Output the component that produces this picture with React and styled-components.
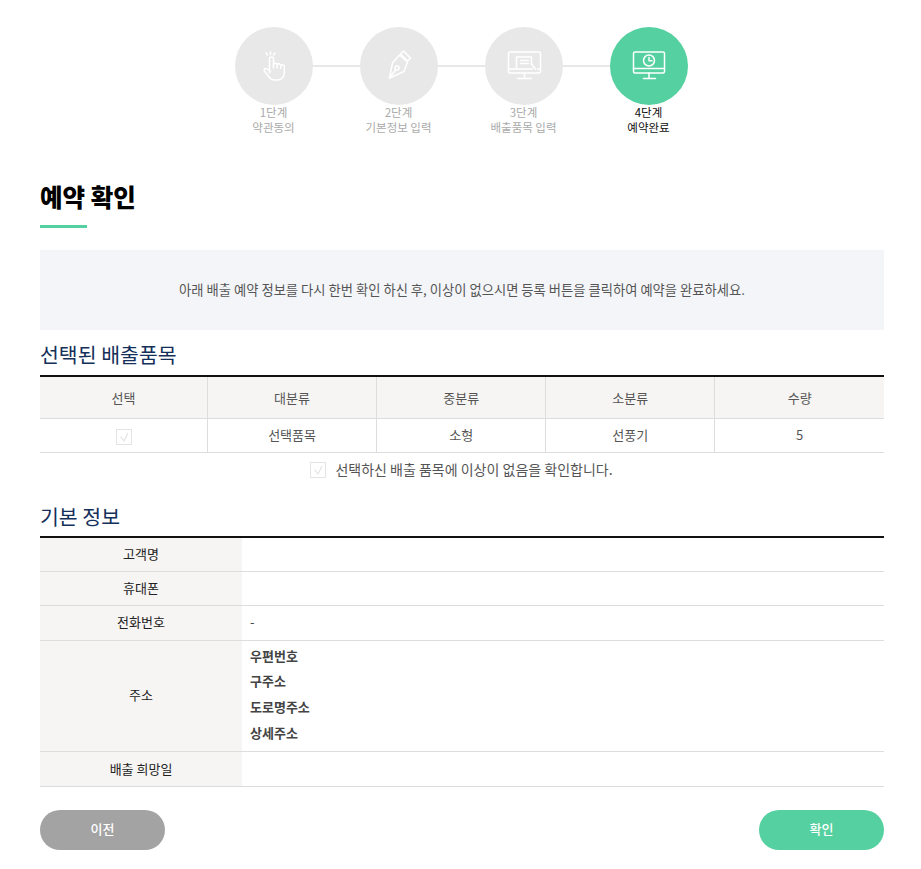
import React from "react"
import styled, { createGlobalStyle } from "styled-components"

const GlobalStyle = createGlobalStyle`
  html, body {
    margin: 0;
    padding: 0;
    background: #fff;
    font-family: "Noto Sans CJK KR", "Noto Sans", sans-serif;
    color: #444;
  }
`

const Page = styled.div`
  width: 844px;
  padding: 27px 37px 20px 40px;
`

const Steps = styled.ol`
  display: flex;
  justify-content: center;
  margin: 0 0 44px;
  padding: 0 2px 0 0;
  list-style: none;
`

const Step = styled.li`
  position: relative;
  width: 125px;
  display: flex;
  flex-direction: column;
  align-items: center;
  font-size: 11.5px;
  line-height: 15px;
  text-align: center;
  color: ${(p) => (p.$active ? "#111" : "#aaa")};

  &:not(:last-child)::after {
    content: "";
    position: absolute;
    top: 38px;
    left: 62px;
    width: 125px;
    height: 2px;
    background: #e8e8e8;
  }
`

const StepCircle = styled.div`
  position: relative;
  z-index: 1;
  width: 78px;
  height: 78px;
  border-radius: 50%;
  display: flex;
  align-items: center;
  justify-content: center;
  background: ${(p) => (p.$active ? "#55d0a0" : "#e8e8e8")};
`

const StepIcon = styled.svg`
  width: 40px;
  height: 42px;
  fill: none;
  stroke: #fff;
  stroke-width: 1.5;
  stroke-linecap: round;
  stroke-linejoin: round;
`

const StepLabel = styled.span`
  display: block;
  white-space: nowrap;
`

const Title = styled.h1`
  margin: 0;
  font-size: 24.5px;
  line-height: 36px;
  font-weight: 900;
  color: #000;
`

const TitleBar = styled.div`
  width: 47px;
  height: 3px;
  margin: 10px 0 22px;
  background: #55d0a0;
`

const Notice = styled.p`
  margin: 0;
  height: 80px;
  padding-top: 30px;
  box-sizing: border-box;
  background: #f4f5f9;
  font-size: 13.3px;
  line-height: 20px;
  text-align: center;
  color: #555;
`

const SectionTitle = styled.h2`
  margin: ${(p) => p.$top}px 0 ${(p) => p.$bottom}px;
  font-size: 20.5px;
  line-height: 30px;
  font-weight: 400;
  color: #14305a;
`

const ItemsTable = styled.table`
  width: 100%;
  table-layout: fixed;
  border-collapse: collapse;
  border-top: 2px solid #111;
  font-size: 13px;
  color: #555;

  th, td {
    text-align: center;
    font-weight: 400;
    border-bottom: 1px solid #ddd;
    border-left: 1px solid #ddd;
  }
  th:first-child, td:first-child {
    border-left: 0;
  }
  th:first-child {
    width: 167px;
  }
  th {
    height: 40px;
    padding: 0 0 1px;
    background: #f6f5f3;
  }
  td {
    height: 31px;
    padding: 0 0 2px;
  }
`

const CheckBox = styled.span`
  display: inline-flex;
  align-items: center;
  justify-content: center;
  width: 14px;
  height: 14px;
  border: 1px solid #e4e4e4;
  background: #fff;
  vertical-align: middle;
`

const ItemCheck = styled.span`
  display: block;
  position: relative;
  top: 1px;
`

const ConfirmRow = styled.label`
  display: flex;
  align-items: center;
  justify-content: center;
  gap: 9px;
  height: 34px;
  padding-right: 1px;
  font-size: 14px;
  color: #555;
`

const ConfirmText = styled.span`
  margin-bottom: 3px;
`

const InfoTable = styled.table`
  width: 100%;
  table-layout: fixed;
  border-collapse: collapse;
  border-top: 2px solid #111;
  font-size: 13px;
  color: #222;

  th, td {
    border-bottom: 1px solid #ddd;
    font-weight: 400;
  }
  th {
    width: 202px;
    padding: 0 0 2px;
    background: #f6f5f3;
    text-align: center;
  }
  td {
    padding: 0 0 2px 8px;
    height: 31.5px;
    color: #444;
  }
  tr:first-child td {
    height: 30.5px;
  }
`

const AddressLine = styled.div`
  font-weight: 700;
  line-height: 25.7px;
  color: #444;
`

const AddressCell = styled.td`
  && {
    padding-top: 2px;
    padding-bottom: 6px;
  }
`

const Actions = styled.div`
  display: flex;
  justify-content: space-between;
  margin-top: 23px;
`

const Button = styled.button`
  width: 125px;
  height: 40px;
  padding: 0 0 2px;
  border: 0;
  border-radius: 20px;
  font-family: inherit;
  font-size: 13px;
  font-weight: 500;
  color: #fff;
  background: ${(p) => (p.$primary ? "#55d0a0" : "#a3a3a3")};
`

const HandIcon = () => (
  <StepIcon viewBox="-1.5 0 40 42">
    <path d="M15 7v2.500M10.500 8l1.500 2M19.500 8l-1.500 2" />
    <path d="M14 28V14a2 2 0 0 1 4 0v9" />
    <path d="M18 20a1.800 1.800 0 0 1 3.600 0v3M21.600 20.500a1.800 1.800 0 0 1 3.600 0v3M25.200 21.500a1.800 1.800 0 0 1 3.600 0V28c0 4-3 7-7 7h-3c-3 0-4.500-1.500-6-4l-4-5c-1-1.500 1-3.500 3-2l3.200 2.500" />
  </StepIcon>
)

const PenIcon = () => (
  <StepIcon viewBox="-1.5 0 40 42">
    <path d="M23 6l7 7-3 3-7-7z" />
    <path d="M19 10l8 7-3.500 9.500L9 33l3-15z" />
    <path d="M9 33l6-8" />
    <circle cx="16.500" cy="23" r="2" />
  </StepIcon>
)

const EditScreenIcon = () => (
  <StepIcon viewBox="0.5 0 40 42">
    <rect x="5" y="7" width="32" height="21" rx="1.500" />
    <path d="M5 24h24M34 24h3M21 28v5M14 33.500h14" />
    <path d="M13 23V12h15v7" />
    <path d="M17 15.500h8M17 18.500h8" />
    <path d="M28 19l4 5" />
  </StepIcon>
)

const ClockScreenIcon = () => (
  <StepIcon viewBox="0.5 0 40 42">
    <rect x="5" y="7" width="31" height="21" rx="1.500" />
    <path d="M5 23.500h31M20.500 28v5M15 33.500h12" />
    <circle cx="20.500" cy="15.500" r="5.500" />
    <path d="M20.500 12.500v3.200h3" />
  </StepIcon>
)

const CheckMark = () => (
  <svg width="10" height="10" viewBox="0 0 10 10" fill="none" stroke="#e4e4e4" strokeWidth="1.2">
    <path d="M1.500 4.500L5 9l4-8" />
  </svg>
)

const steps = [
  { label: ["1단계", "약관동의"], icon: <HandIcon /> },
  { label: ["2단계", "기본정보 입력"], icon: <PenIcon /> },
  { label: ["3단계", "배출품목 입력"], icon: <EditScreenIcon /> },
  { label: ["4단계", "예약완료"], icon: <ClockScreenIcon />, active: true },
]

const App = () => (
  <Page>
    <GlobalStyle />
    <Steps>
      {steps.map((step) => (
        <Step key={step.label[0]} $active={step.active}>
          <StepCircle $active={step.active}>{step.icon}</StepCircle>
          <StepLabel>{step.label[0]}</StepLabel>
          <StepLabel>{step.label[1]}</StepLabel>
        </Step>
      ))}
    </Steps>

    <Title>예약 확인</Title>
    <TitleBar />
    <Notice>아래 배출 예약 정보를 다시 한번 확인 하신 후, 이상이 없으시면 등록 버튼을 클릭하여 예약을 완료하세요.</Notice>

    <SectionTitle $top={9} $bottom={6}>선택된 배출품목</SectionTitle>
    <ItemsTable>
      <thead>
        <tr>
          <th>선택</th>
          <th>대분류</th>
          <th>중분류</th>
          <th>소분류</th>
          <th>수량</th>
        </tr>
      </thead>
      <tbody>
        <tr>
          <td><ItemCheck><CheckBox><CheckMark /></CheckBox></ItemCheck></td>
          <td>선택품목</td>
          <td>소형</td>
          <td>선풍기</td>
          <td>5</td>
        </tr>
      </tbody>
    </ItemsTable>
    <ConfirmRow>
      <CheckBox><CheckMark /></CheckBox>
      <ConfirmText>선택하신 배출 품목에 이상이 없음을 확인합니다.</ConfirmText>
    </ConfirmRow>

    <SectionTitle $top={14} $bottom={5}>기본 정보</SectionTitle>
    <InfoTable>
      <tbody>
        <tr><th>고객명</th><td></td></tr>
        <tr><th>휴대폰</th><td></td></tr>
        <tr><th>전화번호</th><td>-</td></tr>
        <tr>
          <th>주소</th>
          <AddressCell>
            <AddressLine>우편번호</AddressLine>
            <AddressLine>구주소</AddressLine>
            <AddressLine>도로명주소</AddressLine>
            <AddressLine>상세주소</AddressLine>
          </AddressCell>
        </tr>
        <tr><th>배출 희망일</th><td></td></tr>
      </tbody>
    </InfoTable>

    <Actions>
      <Button>이전</Button>
      <Button $primary>확인</Button>
    </Actions>
  </Page>
)

export default App
